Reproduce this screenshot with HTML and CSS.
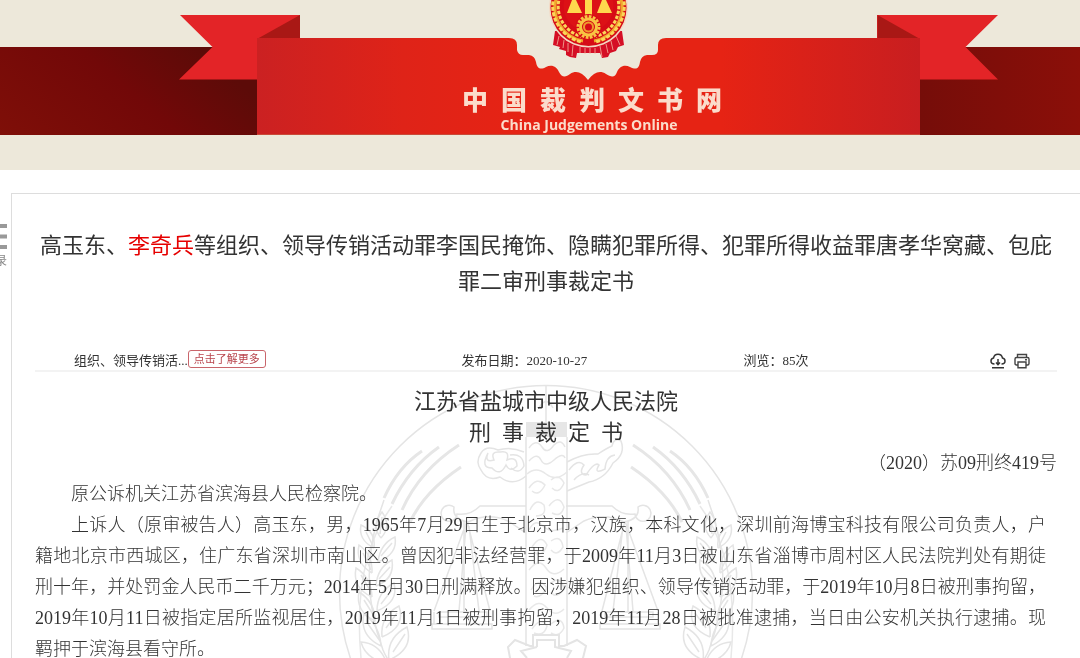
FILE: index.html
```html
<!DOCTYPE html>
<html lang="zh-CN">
<head>
  <meta charset="UTF-8">
  <meta name="viewport" content="width=device-width, initial-scale=1.0">
  <title>中国裁判文书网</title>
  <link rel="stylesheet" href="styles.css">
</head>
<body>
  <div class="page">
    <header class="header">
      <svg class="banner" viewBox="0 0 1080 170" preserveAspectRatio="xMidYMid slice" aria-hidden="true">
        <defs>
          <linearGradient id="bandLeft" x1="0" y1="1" x2="1" y2="0.6">
            <stop offset="0" stop-color="#7f0f08"/>
            <stop offset="0.6" stop-color="#720808"/>
            <stop offset="1" stop-color="#5c0b08"/>
          </linearGradient>
          <linearGradient id="bandRight">
            <stop offset="0" stop-color="#750d09"/>
            <stop offset="1" stop-color="#8b0f09"/>
          </linearGradient>
          <linearGradient id="front">
            <stop offset="0" stop-color="#cb2122"/>
            <stop offset="0.22" stop-color="#df2318"/>
            <stop offset="0.4" stop-color="#e62314"/>
            <stop offset="0.7" stop-color="#e62314"/>
            <stop offset="1" stop-color="#c81e20"/>
          </linearGradient>
        </defs>
        <!-- dark band -->
        <rect x="0" y="47" width="260" height="88" fill="url(#bandLeft)"/>
        <rect x="915" y="47" width="165" height="88" fill="url(#bandRight)"/>
        <!-- ribbon tails -->
        <path d="M180 15H300V38H257V79.500H179L212.500 47Z" fill="#e32427"/>
        <path d="M998 15H877V38H920V79.500H998L965.500 47Z" fill="#e32427"/>
        <path d="M300 15V39H257Z" fill="#a91815"/>
        <path d="M877.500 15V39H920Z" fill="#a91815"/>
        <!-- ribbon front with the scalloped notch -->
        <path d="M257 38H509Q517 38 517 45V50Q518 55 523 55H529Q535 56 536 62C537 69 541 70 546 67C552 64 557 67 559 72C562 78 566 77 570 74C576 70 582 72 588 80C594 72 600 70 606 74C611 77 615 78 617 72C619 67 624 64 630 67C636 70 639 69 640 62Q641 56 647 55H652Q658 55 658 50V45Q658 38 666 38H920V134H257Z" fill="url(#front)"/>
        <path d="M257 134.500H920" stroke="#c94a38"/>
        <!-- national court emblem -->
        <g>
          <path d="M555 31L553 45L560 47L559 49L566 51L566 55L570 57L576 58L577 53L600 53L602 58L608 57L610 53L616 51L618 47L624 45L622 31Z" fill="#d50e25"/>
          <path d="M559 36L557 45M564 40L563 48M568 43L568 52M573 45L572 56M580 47V53M585 48V54M590 48V54M595 48V54M600 46L602 57M606 44L608 53M611 41L613 50M616 36L620 45" stroke="#f3b6a0" stroke-width="0.8"/>
          <circle cx="588.500" cy="8" r="39.500" fill="#f3d9c4"/>
          <circle cx="588.500" cy="8" r="38" fill="#d60c16"/>
          <!-- wheat wreath: stem, then grains on either side of it -->
          <path d="M557 -4A34 34 0 0 0 583 41M620 -4A34 34 0 0 1 594 41" fill="none" stroke="#f0a62c" stroke-width="3"/>
          <path d="M554 -4A37 37 0 0 0 582 42M623 -4A37 37 0 0 1 595 42" fill="none" stroke="#fbd65a" stroke-width="3" stroke-dasharray="4 1.500"/>
          <path d="M560 -4A31 31 0 0 0 584 37M617 -4A31 31 0 0 1 593 37" fill="none" stroke="#fbd65a" stroke-width="3" stroke-dasharray="3.500 1.500"/>
          <circle cx="588.500" cy="6" r="25" fill="#dc1116"/>
          <path d="M585 0H592V17H585ZM567 13L572 0H576L582 13ZM597 13L602 0H606L612 13Z" fill="#ffd84d"/>
          <circle cx="588.500" cy="27" r="13" fill="#d60c16"/>
          <circle cx="588.500" cy="27" r="10.500" fill="none" stroke="#f8c443" stroke-width="3" stroke-dasharray="2.700 1.420"/>
          <circle cx="588.500" cy="27" r="8" fill="none" stroke="#f8c443" stroke-width="3"/>
          <circle cx="588.500" cy="27" r="4.500" fill="none" stroke="#ef9c2e" stroke-width="2"/>
        </g>
      </svg>
      <div class="brand">
        <div class="brand-cn">中&ensp;国&ensp;裁&ensp;判&ensp;文&ensp;书&ensp;网</div>
        <div class="brand-en">China Judgements Online</div>
      </div>
    </header>

    <button class="toc" type="button">
      <svg width="24" height="26" viewBox="0 0 24 26" aria-hidden="true">
        <path d="M0 2H24M0 12.500H24M0 23H24" stroke="#999" stroke-width="4"/>
      </svg>
      <span>目录</span>
    </button>

    <main class="article">
      <h1 class="title">高玉东、<span class="hit">李奇兵</span>等组织、领导传销活动罪李国民掩饰、隐瞒犯罪所得、犯罪所得收益罪唐孝华窝藏、包庇罪二审刑事裁定书</h1>

      <div class="meta">
        <div class="meta-cause">组织、领导传销活...<a class="more" href="#">点击了解更多</a></div>
        <div>发布日期：2020-10-27</div>
        <div>浏览：85次</div>
        <div class="tools">
          <button type="button" aria-label="下载">
            <svg width="16" height="16" viewBox="0 0 16 16" fill="none" stroke="#333" stroke-width="1.500">
              <path d="M4.500 11C2.500 11 1 9.700 1 8C1 6.400 2.200 5.300 3.500 5.100C4 2.700 5.800 1.300 8 1.300C10.200 1.300 12 2.700 12.500 5.100C13.900 5.300 15 6.400 15 8C15 9.700 13.600 11 11.500 11"/>
              <path d="M8 6V11.500M6 9.500L8 11.700L10 9.500M2 14.800H14"/>
            </svg>
          </button>
          <button type="button" aria-label="打印">
            <svg width="16" height="16" viewBox="0 0 16 16" fill="none" stroke="#444" stroke-width="1.400">
              <path d="M3.500 4V1.500H12.500V4M4 12H2.500Q1 12 1 10.500V6Q1 4.500 2.500 4.500H13.500Q15 4.500 15 6V10.500Q15 12 13.500 12H12"/>
              <path d="M4 9H12V14.700H4ZM11 6.700H13"/>
            </svg>
          </button>
        </div>
      </div>

      <section class="doc">
        <svg class="watermark" width="416" height="286" viewBox="337 372 416 286" fill="none" stroke="#e4e4e4" stroke-width="1.500" aria-hidden="true">
          <defs>
            <g id="half">
              <!-- radiating lines -->
              <g stroke="#e6e6e6" stroke-width="3">
                <path d="M421 451Q397 467 383 498"/>
                <path d="M438 447Q408 468 391 504"/>
                <path d="M458 445Q419 470 401 510"/>
                <path d="M460 467Q424 491 409 522"/>
              </g>
              <!-- balance beam and pan -->
              <path d="M525 506H479Q469 516 456 514A8 8 0 1 1 453 507Q451 519 467 522Q487 512 507 521L525 533"/>
              <path d="M466 521L433 611M466 521L489 611M465 526L458 611M468 526L478 611M463 521V612"/>
              <path d="M438 612H486V617H438ZM431 624H491V629H431ZM433 612V624"/>
              <!-- wheat ear -->
              <path d="M383 500Q354 575 382 650Q386 660 393 666"/>
              <path d="M380 538Q370 526 381 512Q391 526 380 538M373 548Q357 540 360 525Q375 532 373 548M377 562Q379 544 394 537Q397 554 377 562"/>
              <path d="M371 573Q354 563 358 545Q372 555 371 573M375 586Q376 568 391 560Q394 579 375 586M371 597Q351 588 355 568Q370 577 371 597"/>
              <path d="M376 611Q376 592 393 583Q398 602 376 611M374 621Q354 611 358 592Q374 602 374 621M381 637Q379 616 398 606Q405 627 381 637"/>
              <path d="M380 646Q358 635 363 614Q379 626 380 646M388 660Q385 638 406 627Q413 649 388 660M386 664Q364 658 360 642Q379 643 386 664"/>
              <path d="M379 534L381 517M365 532L372 546M380 556L391 543M362 553L370 570M378 579L389 567M360 575L370 592M380 604L391 590M363 600L373 616M385 628L396 613M367 624L379 641M392 652L404 634"/>
            </g>
          </defs>
          <circle cx="545" cy="592" r="206.500"/>
          <path d="M360 658Q351 560 391 506M730 658Q739 560 699 506" stroke="#e8e8e8"/>
          <use href="#half"/>
          <use href="#half" transform="translate(1090 0) scale(-1 1)"/>
          <!-- ornamental column -->
          <path d="M525 422H566V437H525Z" fill="#e6e6e6" stroke="none"/>
          <path d="M525 437V646M566 437V646M545 386V422M538 408Q545 395 552 408"/>
          <path d="M528 448Q535 438 541 447Q546 455 553 445Q560 438 564 447M528 461Q536 452 540 460T553 460T564 458" stroke="#e6e6e6"/>
          <path d="M523 452Q510 446 497 450Q485 445 480 453Q474 462 480 470Q486 482 499 477Q512 487 525 476M487 453Q483 463 493 460Q489 451 499 452Q509 450 506 460Q516 456 516 466Q509 473 505 465Q499 477 491 468Q479 468 487 453M509 455Q522 453 523 466Q518 475 510 468"/>
          <path d="M566 462Q582 453 597 454Q606 448 611 446Q613 437 620 441Q625 454 612 463Q604 479 588 482L566 491M568 470Q577 458 583 465Q577 474 585 475Q594 461 598 465Q592 475 604 469Q605 456 614 455M573 480Q581 471 588 475"/>
          <path d="M526 474Q535 466 545 474T566 472M528 488Q536 476 544 485Q538 497 531 491M550 480Q558 473 563 483Q558 495 551 488M529 510Q535 497 543 505Q546 516 535 516M548 506Q558 493 563 507Q560 518 551 513M528 530Q534 518 542 526T562 528M531 547Q540 533 546 545Q542 557 534 553M550 541Q560 534 562 547Q556 557 550 550M528 570Q538 557 545 568T563 569M530 590Q538 576 546 588Q539 599 533 596M550 583Q560 575 563 589Q555 600 550 592M528 610Q538 598 546 608T563 609M531 629Q540 616 546 626Q543 637 533 633M550 624Q561 615 563 628Q558 638 550 633" stroke="#e8e8e8"/>
          <!-- gear -->
          <path d="M515 666L509 658L507 647L514 640L529 646H532V635H558V646H563L576 640L585 646L582 658L576 666M536 647V640H554V647L570 651L566 658M536 647L520 651L526 658" stroke-width="2"/>
        </svg>

        <h2 class="court">江苏省盐城市中级人民法院</h2>
        <h2 class="court">刑&ensp;事&ensp;裁&ensp;定&ensp;书</h2>
        <p class="case-no">（2020）苏09刑终419号</p>
        <p>原公诉机关江苏省滨海县人民检察院。</p>
        <p>上诉人（原审被告人）高玉东，男，1965年7月29日生于北京市，汉族，本科文化，深圳前海博宝科技有限公司负责人，户籍地北京市西城区，住广东省深圳市南山区。曾因犯非法经营罪，于2009年11月3日被山东省淄博市周村区人民法院判处有期徒刑十年，并处罚金人民币二千万元；2014年5月30日刑满释放。因涉嫌犯组织、领导传销活动罪，于2019年10月8日被刑事拘留，2019年10月11日被指定居所监视居住，2019年11月1日被刑事拘留，2019年11月28日被批准逮捕，当日由公安机关执行逮捕。现羁押于滨海县看守所。</p>
      </section>
    </main>
  </div>
</body>
</html>
```
FILE: styles.css
```css
* {
  box-sizing: border-box;
}
body {
  margin: 0;
  background: #fff;
  color: #333;
  font-family: "Liberation Sans", "Noto Sans CJK SC", sans-serif;
}
button {
  padding: 0;
  border: 0;
  background: none;
  color: inherit;
  font: inherit;
  cursor: pointer;
}
.page {
  height: 100vh;
  overflow-y: auto;
  scrollbar-width: none;
}

/* Header: banner drawing and site name share one grid cell */
.header {
  display: grid;
  height: 170px;
  background: #ede8da;
}
.banner,
.brand {
  grid-area: 1 / 1;
}
.banner {
  width: 100%;
  height: 170px;
}
.brand {
  padding: 81px 0 0 104px;
  color: #fbdccb;
  text-align: center;
}
.brand-cn {
  font-family: "Noto Sans CJK SC", sans-serif;
  font-size: 26px;
  font-weight: 900;
  line-height: 36px;
}
.brand-en {
  padding-right: 6px;
  font-family: "Open Sans", sans-serif;
  font-size: 14px;
  font-weight: 700;
  line-height: 16px;
}

/* Contents button, partly off the left edge */
.toc {
  position: absolute;
  top: 224px;
  left: -17px;
  display: flex;
  flex-direction: column;
  gap: 2px;
  color: #888;
  font-size: 12px;
  line-height: 18px;
}

.article {
  margin: 23px 0 0 11px;
  padding: 34px 23px 0;
  border-top: 1px solid #ddd;
  border-left: 1px solid #ddd;
}
.title {
  margin: 0;
  font-size: 22px;
  font-weight: 400;
  line-height: 36px;
  text-align: center;
}
.hit {
  color: #e60000;
}

.meta {
  display: grid;
  grid-template-columns: 55fr 40fr 35fr auto;
  align-items: center;
  height: 22px;
  margin-top: 50px;
  padding: 0 27px 0 39px;
  border-bottom: 2px solid #f3f3f3;
  font-family: "Liberation Serif", "Noto Sans CJK SC", serif;
  font-size: 13px;
  line-height: 20px;
}
.meta-cause {
  display: flex;
  align-items: center;
}
.more {
  margin-bottom: 4px;
  padding: 0 5px;
  border: 1px solid #c9656b;
  border-radius: 3px;
  color: #b8444c;
  font-size: 11px;
  line-height: 16px;
  text-decoration: none;
}
.tools {
  display: flex;
  gap: 8px;
}
.tools svg {
  display: block;
}

.doc {
  position: relative;
  padding-top: 12px;
  font-family: "Liberation Serif", "Noto Sans CJK SC", serif;
  font-size: 18px;
  line-height: 31px;
}
.watermark {
  position: absolute;
  top: 0;
  left: 0;
  right: 0;
  z-index: -1;
  margin: 0 auto;
}
.court {
  margin: 0;
  font-family: "Noto Sans CJK SC", sans-serif;
  font-size: 22px;
  font-weight: 400;
  line-height: 31px;
  text-align: center;
}
.doc p {
  margin: 0;
  padding-right: 11px;
  font-weight: 300;
  text-align: justify;
  text-indent: 2em;
}
.doc .case-no {
  margin-top: 2px;
  padding-right: 0;
  text-align: right;
  text-indent: 0;
}
```
